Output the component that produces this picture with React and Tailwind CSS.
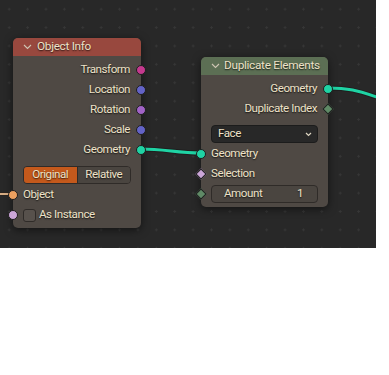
import React from "react";

const Chevron = () => (
  <svg width="9" height="6" viewBox="0 0 9 6" className="shrink-0">
    <polyline points="1,1 4.5,4.5 8,1" fill="none" stroke="#cfc6b4" strokeWidth="1.1" />
  </svg>
);

const Socket = ({ color, side }) => (
  <span
    className={`absolute top-1/2 -translate-y-1/2 w-[10px] h-[10px] rounded-full border border-[#1e1e1e] ${side === "left" ? "left-[-5px]" : "right-[-5px]"}`}
    style={{ backgroundColor: color }}
  />
);

const Diamond = ({ color, side }) => (
  <span
    className={`absolute top-1/2 w-[8px] h-[8px] rotate-45 border border-[#1e1e1e] ${side === "left" ? "left-[-4px]" : "right-[-4px]"}`}
    style={{ backgroundColor: color, marginTop: "-4px" }}
  />
);

const OutRow = ({ label, color, diamond }) => (
  <div className="relative h-5 flex items-center justify-end pr-[11px]">
    <span className="whitespace-nowrap">{label}</span>
    {diamond ? <Diamond color={color} side="right" /> : <Socket color={color} side="right" />}
  </div>
);

const InRow = ({ label, color, diamond }) => (
  <div className="relative h-5 flex items-center pl-[10px]">
    <span className="whitespace-nowrap">{label}</span>
    {diamond ? <Diamond color={color} side="left" /> : <Socket color={color} side="left" />}
  </div>
);

export default function App() {
  return (
    <div className="w-[389px] h-[375px] bg-white font-[Roboto,sans-serif] text-[11.6px] tracking-[-0.45px] text-[#ede2c8] [text-shadow:0_1px_1.5px_rgba(0,0,0,0.75)]">
      <div className="relative w-[376px] h-[248px] bg-[#282828] bg-[radial-gradient(circle,#363636_1px,transparent_1.2px)] bg-[size:18.4px_18.4px] overflow-hidden">
        <svg className="absolute inset-0" width="376" height="248">
          <path d="M0 194 L13 194" stroke="#2a2420" strokeWidth="4" fill="none" />
          <path d="M0 194 L13 194" stroke="#d7ad84" strokeWidth="2" fill="none" />
          <path d="M141 149 C 165 149, 177 153, 201 153" stroke="#1f1f1f" strokeWidth="5" fill="none" />
          <path d="M141 149 C 165 149, 177 153, 201 153" stroke="#1fd3a4" strokeWidth="3" fill="none" />
          <path d="M328 88 C 350 88, 358 91, 380 98" stroke="#1f1f1f" strokeWidth="5" fill="none" />
          <path d="M328 88 C 350 88, 358 91, 380 98" stroke="#1fd3a4" strokeWidth="3" fill="none" />
        </svg>

        {/* Object Info node */}
        <div className="absolute left-[13px] top-[38px] w-[128px] h-[190px] rounded-[5px] bg-[#4f4944] shadow-[0_2px_8px_rgba(0,0,0,0.55)]">
          <div className="h-[18px] rounded-t-[5px] bg-[#98483e] flex items-center pl-[10px] gap-[5px] text-[11.8px] tracking-[-0.3px]">
            <Chevron />
            <span className="whitespace-nowrap">Object Info</span>
          </div>
          <div className="pt-[4px]">
            <OutRow label="Transform" color="#c4398e" />
            <OutRow label="Location" color="#6363c7" />
            <OutRow label="Rotation" color="#a163c7" />
            <OutRow label="Scale" color="#6363c7" />
            <OutRow label="Geometry" color="#1fd3a4" />
            <div className="mt-[6px] mx-[10px] h-[18px] flex rounded-[4px] border border-[#2f2b28] overflow-hidden">
              <div className="flex-1 bg-[#c4591c] flex items-center justify-center">Original</div>
              <div className="flex-1 bg-[#4a4540] flex items-center justify-center border-l border-[#2f2b28]">Relative</div>
            </div>
            <div className="mt-[1px]">
              <InRow label="Object" color="#eda05f" />
              <div className="relative h-5 flex items-center pl-[10px]">
                <span className="w-[13px] h-[13px] rounded-[3px] bg-[#57514c] border border-[#2f2b28] mr-[3px]" />
                <span className="whitespace-nowrap">As Instance</span>
                <Socket color="#cca6d9" side="left" />
              </div>
            </div>
          </div>
        </div>

        {/* Duplicate Elements node */}
        <div className="absolute left-[201px] top-[57px] w-[127px] h-[150px] rounded-[5px] bg-[#4f4944] shadow-[0_2px_8px_rgba(0,0,0,0.55)]">
          <div className="h-[18px] rounded-t-[5px] bg-[#5c6f54] flex items-center pl-[10px] gap-[4px] text-[11.8px] tracking-[-0.3px]">
            <Chevron />
            <span className="whitespace-nowrap">Duplicate Elements</span>
          </div>
          <div className="pt-[4px]">
            <OutRow label="Geometry" color="#1fd3a4" />
            <OutRow label="Duplicate Index" color="#5f8a66" diamond />
            <div className="mt-[6px] mx-[10px] h-[18px] rounded-[4px] bg-[#282828] border border-[#1c1c1c] flex items-center justify-between pl-[6px] pr-[5px]">
              <span>Face</span>
              <svg width="7" height="5" viewBox="0 0 7 5">
                <polyline points="1,1 3.5,3.5 6,1" fill="none" stroke="#ddd5c2" strokeWidth="1.2" />
              </svg>
            </div>
            <div className="mt-[1px]">
              <InRow label="Geometry" color="#1fd3a4" />
              <InRow label="Selection" color="#cca6d9" diamond />
            </div>
            <div className="relative mt-[1px] h-[18px]">
              <div className="mx-[10px] h-[18px] rounded-[4px] bg-[#4a4540] border border-[#2f2b28] flex items-center justify-between pl-[12px] pr-[14px]">
                <span>Amount</span>
                <span>1</span>
              </div>
              <Diamond color="#5f8a66" side="left" />
            </div>
          </div>
        </div>
      </div>
    </div>
  );
}
